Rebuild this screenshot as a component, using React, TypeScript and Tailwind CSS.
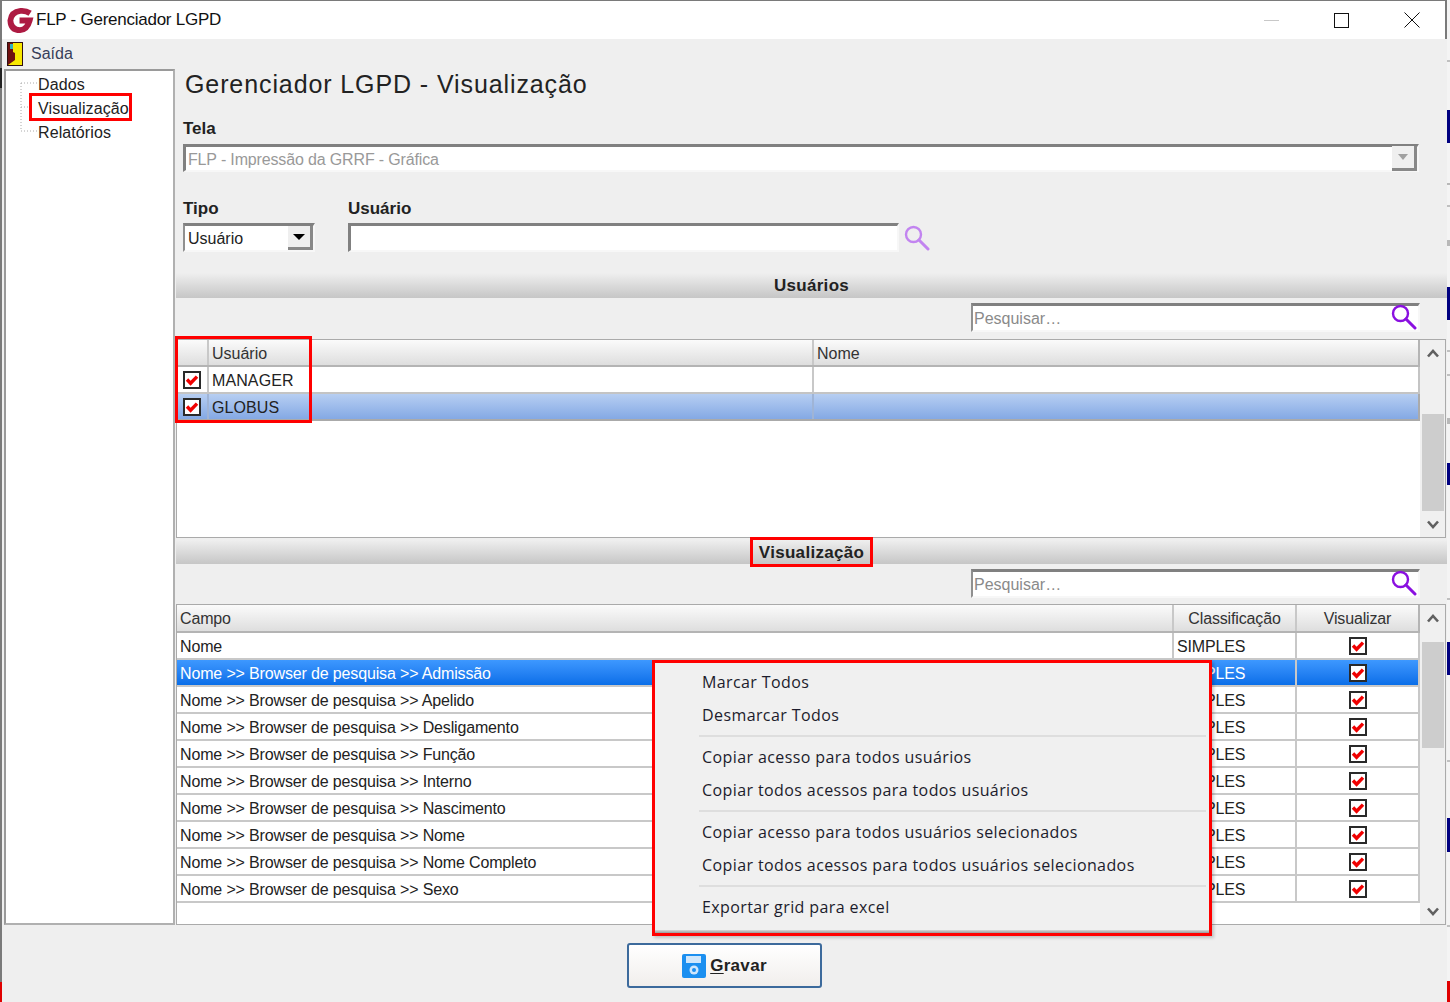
import React from "react";

const sans = "font-['Liberation_Sans',Arial,sans-serif]";

const campos = ["Admissão", "Apelido", "Desligamento", "Função", "Interno", "Nascimento", "Nome", "Nome Completo", "Sexo"];

const screenBits = [
  { top: 60, h: 2, c: "bg-[#c0c0c0]" },
  { top: 110, h: 33, c: "bg-[#000080]" },
  { top: 183, h: 2, c: "bg-[#b8b8b8]" },
  { top: 205, h: 2, c: "bg-[#c0c0c0]" },
  { top: 240, h: 6, c: "bg-[#b8b8b8]" },
  { top: 287, h: 33, c: "bg-[#000080]" },
  { top: 350, h: 2, c: "bg-[#c0c0c0]" },
  { top: 374, h: 2, c: "bg-[#c0c0c0]" },
  { top: 418, h: 6, c: "bg-[#b8b8b8]" },
  { top: 463, h: 22, c: "bg-[#000080]" },
  { top: 598, h: 2, c: "bg-[#c0c0c0]" },
  { top: 642, h: 33, c: "bg-[#000080]" },
  { top: 760, h: 2, c: "bg-[#c0c0c0]" },
  { top: 818, h: 34, c: "bg-[#000080]" },
  { top: 925, h: 2, c: "bg-[#c0c0c0]" },
  { top: 981, h: 21, c: "bg-[#e00000]" },
];

function Check() {
  return (
    <svg width="18" height="18" viewBox="0 0 18 18" className="block">
      <rect x="1" y="1" width="16" height="16" fill="#fff" stroke="#2a2a2a" strokeWidth="2" />
      <path d="M4 8.5 L7.6 12.2 L14 5.6" fill="none" stroke="#f00000" strokeWidth="3.4" />
    </svg>
  );
}

function SearchIcon({ color }: { color: string }) {
  return (
    <svg width="27" height="27" viewBox="0 0 27 27" className="block">
      <circle cx="10.5" cy="10.5" r="7.5" fill="none" stroke={color} strokeWidth="2.4" />
      <path d="M16 16 L25 25" stroke={color} strokeWidth="3" strokeLinecap="round" />
    </svg>
  );
}

function Chevron({ up }: { up?: boolean }) {
  return (
    <svg width="12" height="9" viewBox="0 0 12 9" className="block">
      <path d={up ? "M1 7.5 L6 2 L11 7.5" : "M1 1.5 L6 7 L11 1.5"} fill="none" stroke="#606060" strokeWidth="2.6" />
    </svg>
  );
}

function Band({ label, h }: { label: string; h: string }) {
  return (
    <div className={`${h} flex items-center justify-center bg-gradient-to-b from-[#efefef] to-[#c6c6c6] pt-px text-[17px] font-bold tracking-[0.3px] text-[#222]`}>
      <span>{label}</span>
    </div>
  );
}

function SearchRow({ className }: { className: string }) {
  return (
    <div className={`${className} ml-[795px] flex h-[29px] w-[449px] items-center justify-between border-t-[3px] border-l-[2px] border-t-[#808080] border-l-[#909090] border-r-2 border-b-2 border-r-[#f7f7f7] border-b-[#f7f7f7] bg-white pl-[1px] pr-[1px]`}>
      <span className="pt-[2px] text-[16px] text-[#8a8a8a]">Pesquisar…</span>
      <span className="-mt-[3px]"><SearchIcon color="#8a10e0" /></span>
    </div>
  );
}

function Scrollbar({ thumbTop, thumbH }: { thumbTop: string; thumbH: string }) {
  return (
    <div className="flex w-[25px] flex-col items-center bg-[#f0f0f0]">
      <div className="mt-[9px] h-[9px]"><Chevron up /></div>
      <div className={`${thumbTop} ${thumbH} w-[22px] bg-[#cdcdcd]`} />
      <div className="mt-auto mb-[8px] h-[9px]"><Chevron /></div>
    </div>
  );
}

function MenuItem({ label, className }: { label: string; className: string }) {
  return (
    <div className={`${className} pl-[47px] font-['Open_Sans',sans-serif] text-[16px] leading-[24px] tracking-[0.4px] text-[#1c1c2c]`}>{label}</div>
  );
}

function Separator({ className }: { className: string }) {
  return <div className={`${className} ml-[44px] mr-[3px] h-[2px] bg-[#dedede]`} />;
}

export default function App() {
  return (
    <div className={`relative flex h-[1002px] w-[1450px] overflow-hidden bg-white text-[#1a1a1a] ${sans}`}>
      <div className="flex w-[1447px] flex-col border-l-2 border-[#7a7a7a] bg-[#efefef]">
        <div className="flex h-[39px] items-center border-t border-r-2 border-[#7a7a7a] bg-white">
          <svg width="27" height="27" viewBox="0 0 28 28" className="ml-[5px] shrink-0">
            <path d="M24 6.5 Q19.5 3.5 14 4 Q4.5 5 3.5 14 Q4 24 13.5 24 Q21 23.5 23.5 14 H13" fill="none" stroke="#ad1a42" strokeWidth="6" />
          </svg>
          <span className="ml-[2px] text-[17px] tracking-[-0.25px] text-[#111]">FLP - Gerenciador LGPD</span>
          <div className="ml-auto flex items-center">
            <span className="h-px w-[15px] bg-[#c8c8c8]" />
            <span className="ml-[55px] h-[15px] w-[15px] border border-[#111]" />
            <svg width="16" height="16" viewBox="0 0 16 16" className="mr-[25px] ml-[55px]">
              <path d="M0.5 0.5 L15.5 15.5 M15.5 0.5 L0.5 15.5" stroke="#111" strokeWidth="1" />
            </svg>
          </div>
        </div>

        <div className="flex h-[29px] items-center pl-[5px]">
          <svg width="16" height="24" viewBox="0 0 16 24" className="shrink-0">
            <rect x="0.5" y="0.5" width="15" height="23" fill="#f8e800" stroke="#301010" />
            <path d="M1 1 H6 V10 L8 11 V18 L1 23 Z" fill="#701010" />
            <rect x="3" y="2" width="3" height="5" fill="#30b0c0" />
          </svg>
          <span className="ml-[8px] text-[16px] text-[#38405a]">Saída</span>
        </div>

        <div className="flex pl-[2px]">
          <div className="relative mt-px h-[856px] w-[171px] border-t-2 border-l-2 border-r-2 border-b-2 border-t-[#9a9a9a] border-l-[#9a9a9a] border-r-[#b0b0b0] border-b-[#b0b0b0] bg-white pt-[2px] pl-[32px] text-[16px] leading-[24px] tracking-[0.1px] text-[#222]">
            <svg width="20" height="52" viewBox="0 0 20 52" className="absolute top-[10px] left-[14px]">
              <path d="M1 2 V50 M1 2 H17 M1 26 H10 M1 50 H17" stroke="#aaa" strokeDasharray="1 2" fill="none" />
            </svg>
            <div>Dados</div>
            <div>Visualização</div>
            <div>Relatórios</div>
          </div>

          <div className="ml-px mt-px flex w-[1271px] flex-col">
            <div className="flex h-[32px] items-center pl-[9px] text-[25px] tracking-[0.9px] text-[#222]">Gerenciador LGPD - Visualização</div>
            <div className="mt-[15px] h-[21px] pl-[7px] text-[17px] font-bold text-[#222]">Tela</div>
            <div className="mt-[7px] ml-[7px] flex h-[28px] w-[1236px] items-center justify-between border-t-[3px] border-l-[3px] border-r-2 border-b-2 border-t-[#808080] border-l-[#808080] border-r-[#f7f7f7] border-b-[#f7f7f7] bg-white pl-[2px]">
              <span className="pt-[2px] text-[16px] tracking-[-0.15px] text-[#999]">FLP - Impressão da GRRF - Gráfica</span>
              <span className="flex h-[25px] w-[25px] items-center justify-center border-r-[3px] border-b-[3px] border-r-[#888] border-b-[#888] bg-[#efefef]">
                <span className="h-0 w-0 border-x-[5px] border-t-[6px] border-x-transparent border-t-[#a0a0a0]" />
              </span>
            </div>

            <div className="mt-[24px] flex h-[21px] text-[17px] font-bold text-[#222]">
              <span className="ml-[7px] w-[165px]">Tipo</span>
              <span>Usuário</span>
            </div>
            <div className="mt-[6px] flex h-[29px] items-start">
              <div className="ml-[7px] flex h-[29px] w-[132px] items-center justify-between border-t-[3px] border-l-[2px] border-r-2 border-b-2 border-t-[#808080] border-l-[#909090] border-r-[#f7f7f7] border-b-[#f7f7f7] bg-white pl-[3px]">
                <span className="pt-[2px] text-[16px] text-[#222]">Usuário</span>
                <span className="flex h-[24px] w-[25px] items-center justify-center border-r-[3px] border-b-[3px] border-r-[#888] border-b-[#888] bg-[#efefef]">
                  <span className="h-0 w-0 border-x-[6px] border-t-[6px] border-x-transparent border-t-black" />
                </span>
              </div>
              <div className="ml-[33px] h-[29px] w-[551px] border-t-[3px] border-l-[3px] border-r-2 border-b-2 border-t-[#808080] border-l-[#808080] border-r-[#f7f7f7] border-b-[#f7f7f7] bg-white" />
              <div className="mt-[1px] ml-[4px]"><SearchIcon color="#c284f0" /></div>
            </div>

            <div className="mt-[21px]"><Band label="Usuários" h="h-[25px]" /></div>
            <SearchRow className="mt-[5px]" />

            <div className="mt-[7px] flex h-[199px] w-[1270px] border border-[#aaa] bg-white">
              <div className="w-[1243px] text-[16px]">
                <div className="flex h-[27px] border-r-2 border-b-2 border-[#b4b4b4] bg-gradient-to-b from-[#fbfbfb] to-[#dedede] text-[#333]">
                  <span className="w-[32px] border-r-2 border-[#c8c8c8]" />
                  <span className="flex w-[605px] items-center border-r-2 border-[#c8c8c8] pt-[2px] pl-[3px]">Usuário</span>
                  <span className="flex items-center pt-[2px] pl-[3px]">Nome</span>
                </div>
                <div className="flex h-[27px] border-r-2 border-b-2 border-[#c4c4c4] tracking-[0.1px] text-[#222]">
                  <span className="flex w-[32px] items-center justify-center border-r-2 border-[#c8c8c8] pr-px"><Check /></span>
                  <span className="flex w-[605px] items-center border-r-2 border-[#c8c8c8] pt-[2px] pl-[3px]">MANAGER</span>
                </div>
                <div className="flex h-[27px] border-r-2 border-b-2 border-[#aaa] bg-gradient-to-b from-[#b7cef2] to-[#84a9e4] tracking-[0.1px] text-[#222]">
                  <span className="flex w-[32px] items-center justify-center border-r-2 border-[#9fb4d6] pr-px"><Check /></span>
                  <span className="flex w-[605px] items-center border-r-2 border-[#9fb4d6] pt-[2px] pl-[3px]">GLOBUS</span>
                </div>
              </div>
              <Scrollbar thumbTop="mt-[56px]" thumbH="h-[97px]" />
            </div>

            <div className="mt-[2px]"><Band label="Visualização" h="h-[24px]" /></div>
            <SearchRow className="mt-[5px]" />

            <div className="mt-[6px] flex h-[321px] w-[1270px] border border-[#aaa] bg-white">
              <div className="w-[1243px] text-[16px] tracking-[-0.15px] text-[#222]">
                <div className="flex h-[28px] border-r-2 border-b-2 border-[#b4b4b4] bg-gradient-to-b from-[#fbfbfb] to-[#dedede] text-[#333]">
                  <span className="flex w-[997px] items-center border-r-2 border-[#c8c8c8] pt-[2px] pl-[3px]">Campo</span>
                  <span className="flex w-[123px] items-center justify-center border-r-2 border-[#c8c8c8] pt-[2px]">Classificação</span>
                  <span className="flex w-[121px] items-center justify-center pt-[2px]">Visualizar</span>
                </div>
                <div className="flex h-[27px] border-r-2 border-b-2 border-[#c8c8c8]">
                  <span className="flex w-[997px] items-center border-r-2 border-[#c8c8c8] pt-[2px] pl-[3px]">Nome</span>
                  <span className="flex w-[123px] items-center border-r-2 border-[#c8c8c8] pt-[2px] pl-[3px]">SIMPLES</span>
                  <span className="flex w-[121px] items-center justify-center"><Check /></span>
                </div>
                {campos.map((c, i) => (
                  <div key={c} className={i === 0 ? "flex h-[27px] border-r-2 border-b-2 border-[#c8c8c8] bg-gradient-to-b from-[#3d98ff] to-[#086ee8] text-white" : "flex h-[27px] border-r-2 border-b-2 border-[#c8c8c8]"}>
                    <span className="flex w-[997px] items-center border-r-2 border-[#c8c8c8] pt-[2px] pl-[3px]">Nome {">>"} Browser de pesquisa {">>"} {c}</span>
                    <span className="flex w-[123px] items-center border-r-2 border-[#c8c8c8] pt-[2px] pl-[3px]">SIMPLES</span>
                    <span className="flex w-[121px] items-center justify-center"><Check /></span>
                  </div>
                ))}
              </div>
              <Scrollbar thumbTop="mt-[19px]" thumbH="h-[106px]" />
            </div>

            <div className="mt-[18px] ml-[451px] flex h-[45px] w-[195px] items-center justify-center rounded-[3px] border-2 border-[#3c6a9c] bg-gradient-to-b from-white to-[#f1eeec] text-[17px] font-bold tracking-[0.3px] text-[#222]">
              <svg width="24" height="24" viewBox="0 0 24 24" className="mr-[4px] shrink-0">
                <rect width="24" height="24" rx="2" fill="#1b8ff0" />
                <rect x="4" y="2" width="15" height="7" fill="#cfe6fb" />
                <circle cx="12" cy="16" r="4.5" fill="#cfe6fb" />
                <circle cx="12" cy="16" r="2" fill="#1b8ff0" />
              </svg>
              <span><span className="underline underline-offset-2">G</span>ravar</span>
            </div>
          </div>
        </div>
      </div>

      <div className="relative w-[3px] bg-[#f4f4f4]">
        {screenBits.map((b) => (
          <div key={b.top} className={`absolute left-0 w-[3px] ${b.c}`} style={{ top: b.top, height: b.h }} />
        ))}
      </div>

      {/* bits of the desktop behind the window, left edge */}
      <div className="absolute top-[68px] left-0 h-[20px] w-[2px] bg-[#222]" />
      <div className="absolute top-[982px] left-0 h-[20px] w-[2px] bg-[#e00000]" />

      {/* red annotation boxes drawn over the screenshot */}
      <div className="absolute top-[93px] left-[29px] h-[28px] w-[103px] border-[3px] border-[#ff0000]" />
      <div className="absolute top-[336px] left-[175px] h-[87px] w-[137px] border-[3px] border-[#ff0000]" />
      <div className="absolute top-[537px] left-[750px] h-[30px] w-[123px] border-[3px] border-[#ff0000]" />

      <div className="absolute top-[660px] left-[652px] flex h-[276px] w-[560px] flex-col border-[3px] border-[#ff0000] bg-[#f0f0f0] shadow-[2px_2px_3px_rgba(0,0,0,0.2)]">
        <MenuItem label="Marcar Todos" className="mt-[7px]" />
        <MenuItem label="Desmarcar Todos" className="mt-[9px]" />
        <Separator className="mt-[8px]" />
        <MenuItem label="Copiar acesso para todos usuários" className="mt-[8px]" />
        <MenuItem label="Copiar todos acessos para todos usuários" className="mt-[9px]" />
        <Separator className="mt-[8px]" />
        <MenuItem label="Copiar acesso para todos usuários selecionados" className="mt-[8px]" />
        <MenuItem label="Copiar todos acessos para todos usuários selecionados" className="mt-[9px]" />
        <Separator className="mt-[8px]" />
        <MenuItem label="Exportar grid para excel" className="mt-[8px]" />
        <div className="mt-auto h-[3px] bg-gradient-to-b from-[#d8d8d8] to-[#9a9a9a]" />
      </div>
    </div>
  );
}
